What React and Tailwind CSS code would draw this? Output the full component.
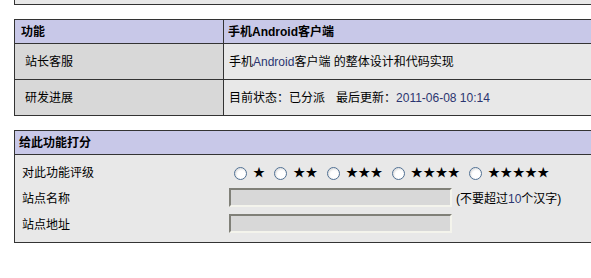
export default function App() {
  const font = "font-['Liberation_Sans','Noto_Sans_CJK_SC',sans-serif]";
  const latin = "text-[#2b3570]";
  const Radio = () => (
    <span className="inline-block w-[13px] h-[13px] rounded-full border border-[#4f6f92] bg-white shadow-[inset_1px_1px_2px_rgba(0,0,0,0.15)] shrink-0" />
  );
  const groups = ["★", "★★", "★★★", "★★★★", "★★★★★"];
  return (
    <div className={`w-full h-[278px] overflow-hidden bg-white text-[12px] leading-[14px] text-black ${font}`}>
      <div className="ml-[14px] mr-[-20px] h-[5px] bg-[#e8e8e8] border-l border-b border-[#333]" />

      <div className="ml-[14px] mr-[-20px] mt-[14px] border border-[#333]">
        <div className="flex h-[24px] bg-[#c8c8e8] border-b border-[#333] font-bold">
          <div className="w-[209px] border-r border-[#333] pl-[6px] flex items-center">功能</div>
          <div className="flex-1 pl-[4px] flex items-center">手机Android客户端</div>
        </div>
        <div className="flex h-[36px] border-b border-[#333]">
          <div className="w-[209px] bg-[#d8d8d8] border-r border-[#333] pl-[10px] flex items-center">站长客服</div>
          <div className="flex-1 bg-[#e8e8e8] pl-[5px] flex items-center whitespace-pre">
            手机<span className={latin}>Android</span>客户端 的整体设计和代码实现
          </div>
        </div>
        <div className="flex h-[35px]">
          <div className="w-[209px] bg-[#d8d8d8] border-r border-[#333] pl-[10px] flex items-center">研发进展</div>
          <div className="flex-1 bg-[#e8e8e8] pl-[5px] flex items-center">
            <span>目前状态：已分派</span>
            <span className="ml-[11px]">最后更新：</span>
            <span className={latin}>2011-06-08 10:14</span>
          </div>
        </div>
      </div>

      <div className="ml-[14px] mr-[-20px] mt-[14px] border border-[#333]">
        <div className="h-[24px] bg-[#c8c8e8] border-b border-[#333] font-bold pl-[4px] flex items-center">给此功能打分</div>
        <div className="bg-[#e8e8e8] pt-[5px] pb-[4px]">
          <div className="flex h-[26px] items-center">
            <div className="w-[209px] pl-[7px]">对此功能评级</div>
            <div className="flex items-center pl-[10px]">
              {groups.map((g, i) => (
                <div key={i} className={`flex items-center ${i > 0 ? "ml-[9px]" : ""}`}>
                  <Radio />
                  <span className="ml-[6px] tracking-[0.3px]">{g}</span>
                </div>
              ))}
            </div>
          </div>
          <div className="flex h-[26px]">
            <div className="w-[209px] pl-[7px] flex items-center">站点名称</div>
            <div className="flex items-start pl-[5px]">
              <div className="mt-[2px] w-[223px] h-[19px] border-2 border-t-[#808078] border-l-[#808078] border-b-[#f4f4ec] border-r-[#f4f4ec] bg-[#d8d8d8]" />
              <span className="ml-[4px] self-center">(不要超过<span className={latin}>10</span>个汉字)</span>
            </div>
          </div>
          <div className="flex h-[26px]">
            <div className="w-[209px] pl-[7px] flex items-center">站点地址</div>
            <div className="flex items-start pl-[5px]">
              <div className="mt-[2px] w-[223px] h-[19px] border-2 border-t-[#808078] border-l-[#808078] border-b-[#f4f4ec] border-r-[#f4f4ec] bg-[#d8d8d8]" />
            </div>
          </div>
        </div>
      </div>
    </div>
  );
}
